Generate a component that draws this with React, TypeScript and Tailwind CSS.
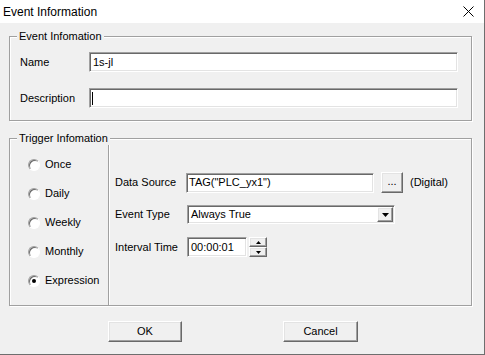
import React from "react";

const sunken =
  "bg-white border border-t-[#a0a0a0] border-l-[#a0a0a0] border-b-white border-r-white shadow-[inset_1px_1px_0_#696969,inset_-1px_-1px_0_#e3e3e3]";
const raised =
  "bg-[#f0f0f0] border border-t-white border-l-white border-b-[#696969] border-r-[#696969] shadow-[inset_-1px_-1px_0_#a0a0a0,inset_1px_1px_0_#e3e3e3]";
const etched =
  "border border-[#a0a0a0] shadow-[inset_1px_1px_0_#fff,1px_1px_0_#fff]";

function Radio({ label, checked }: { label: string; checked?: boolean }) {
  return (
    <div className="flex h-[29px] items-center">
      <span className="flex h-[12px] w-[12px] items-center justify-center rounded-full border border-t-[#a0a0a0] border-l-[#a0a0a0] border-b-white border-r-white bg-white shadow-[inset_1px_1px_0_#696969]">
        {checked && <span className="h-[4px] w-[4px] rounded-full bg-black" />}
      </span>
      <span className="ml-[5px]">{label}</span>
    </div>
  );
}

export default function App() {
  return (
    <div className="flex h-[355px] w-[485px] flex-col border-r border-b border-[#6e6e6e] bg-[#f0f0f0] font-['Liberation_Sans',Arial,sans-serif] text-[11px] text-black">
      {/* title bar */}
      <div className="flex h-[23px] shrink-0 items-center justify-between bg-white pl-[3px] pr-[10px]">
        <span className="text-[12px]">Event Information</span>
        <svg width="11" height="11" viewBox="0 0 11 11">
          <path d="M0.5 0.5 L10.5 10.5 M10.5 0.5 L0.5 10.5" stroke="#000" strokeWidth="1" />
        </svg>
      </div>

      {/* Event Information group */}
      <div className={`relative ml-[9px] mt-[13px] h-[85px] w-[463px] ${etched} pl-[10px] pt-[15px]`}>
        <span className="absolute -top-[7px] left-[7px] bg-[#f0f0f0] px-[2px] leading-[13px]">
          Event Infomation
        </span>
        <div className="flex h-[20px] items-center">
          <span className="w-[69px]">Name</span>
          <div className={`flex h-[20px] w-[369px] items-center pl-[3px] ${sunken}`}>1s-jl</div>
        </div>
        <div className="mt-[16px] flex h-[20px] items-center">
          <span className="w-[69px]">Description</span>
          <div className={`flex h-[20px] w-[369px] items-center pl-[2px] ${sunken}`}>
            <span className="h-[13px] w-[1px] bg-black" />
          </div>
        </div>
      </div>

      {/* Trigger Information group */}
      <div className={`relative ml-[9px] mt-[17px] flex h-[168px] w-[463px] ${etched}`}>
        <span className="absolute -top-[7px] left-[7px] z-10 bg-[#f0f0f0] px-[2px] leading-[13px]">
          Trigger Infomation
        </span>
        <div className="w-[98px] shrink-0 pl-[18px] pt-[11px]">
          <Radio label="Once" />
          <Radio label="Daily" />
          <Radio label="Weekly" />
          <Radio label="Monthly" />
          <Radio label="Expression" checked />
        </div>
        <div className="flex-1 border-l border-[#a0a0a0] pl-[6px] pt-[33px] shadow-[inset_1px_0_0_#fff]">
          <div className="flex h-[21px] items-center">
            <span className="w-[71px]">Data Source</span>
            <div className={`flex h-[20px] w-[188px] items-center pl-[2px] ${sunken}`}>TAG("PLC_yx1")</div>
            <div className={`ml-[7px] flex h-[21px] w-[22px] items-center justify-center ${raised}`}>
              <span className="-mt-[2px]">...</span>
            </div>
            <span className="ml-[7px]">(Digital)</span>
          </div>
          <div className="mt-[12px] flex h-[19px] items-center">
            <span className="w-[72px]">Event Type</span>
            <div className={`flex h-[19px] w-[208px] items-center justify-between pl-[3px] pr-[1px] ${sunken}`}>
              <span>Always True</span>
              <div className={`flex h-[15px] w-[16px] items-center justify-center ${raised}`}>
                <svg width="7" height="4" viewBox="0 0 7 4">
                  <path d="M0 0 H7 L3.5 4 Z" fill="#000" />
                </svg>
              </div>
            </div>
          </div>
          <div className="mt-[13px] flex h-[20px] items-center">
            <span className="w-[72px]">Interval Time</span>
            <div className={`flex h-[20px] w-[60px] items-center pl-[3px] ${sunken}`}>00:00:01</div>
            <div className="ml-[2px] flex h-[20px] w-[18px] flex-col">
              <div className={`flex h-[10px] items-center justify-center ${raised}`}>
                <svg width="5" height="3" viewBox="0 0 5 3">
                  <path d="M2.5 0 L5 3 H0 Z" fill="#000" />
                </svg>
              </div>
              <div className={`flex h-[10px] items-center justify-center ${raised}`}>
                <svg width="5" height="3" viewBox="0 0 5 3">
                  <path d="M0 0 H5 L2.5 3 Z" fill="#000" />
                </svg>
              </div>
            </div>
          </div>
        </div>
      </div>

      {/* buttons */}
      <div className="mt-[15px] flex pl-[108px]">
        <div className={`flex h-[21px] w-[74px] items-center justify-center ${raised}`}>OK</div>
        <div className={`ml-[101px] flex h-[21px] w-[75px] items-center justify-center ${raised}`}>Cancel</div>
      </div>
    </div>
  );
}
